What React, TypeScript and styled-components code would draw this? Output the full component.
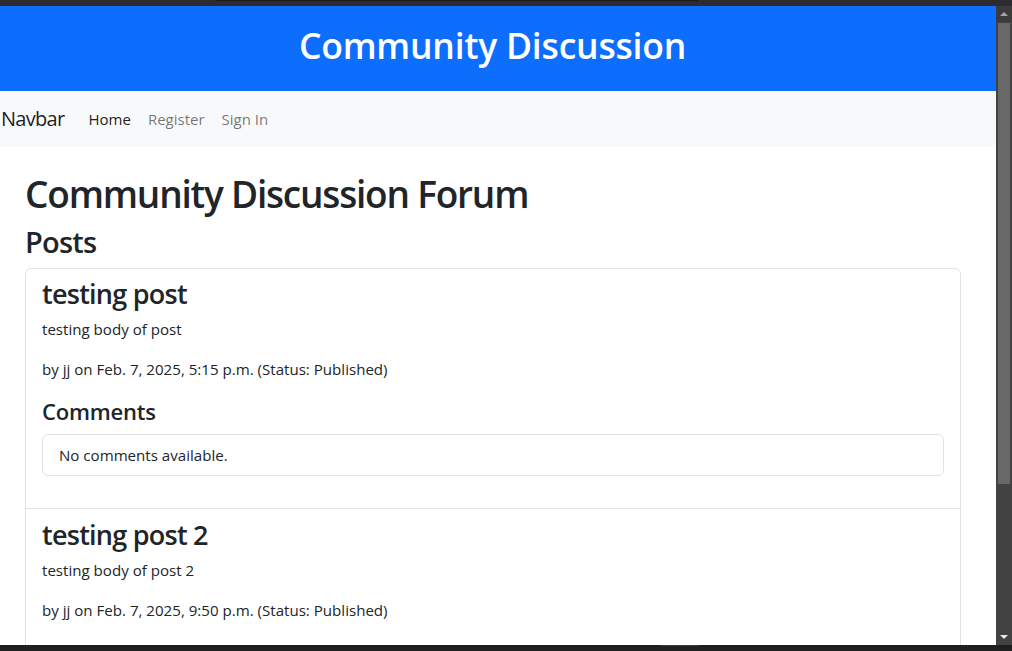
import React from "react";
import styled, { createGlobalStyle } from "styled-components";

const GlobalStyle = createGlobalStyle`
  html, body { margin: 0; padding: 0; overflow: hidden; background: #ffffff; }
  body {
    font-family: "Open Sans", "Noto Sans", "Liberation Sans", sans-serif;
    font-size: 16px;
    line-height: 1.5;
    color: #212529;
  }
  * { box-sizing: border-box; }
`;

const Frame = styled.div`
  width: 1012px;
  height: 651px;
  display: flex;
  flex-direction: column;
  background: #2c2b30;
  overflow: hidden;
`;

const TopChrome = styled.div`
  height: 6px;
  flex: none;
  background: #2c2b30;
  display: flex;
  padding-left: 215px;
`;

const TopChromeTab = styled.div`
  width: 483px;
  height: 1px;
  background: #1c1b1f;
`;

const Middle = styled.div`
  flex: 1;
  display: flex;
  min-height: 0;
`;

const Viewport = styled.div`
  width: 996px;
  flex: none;
  background: #ffffff;
  overflow: hidden;
  display: flex;
  flex-direction: column;
`;

const Scrollbar = styled.div`
  width: 16px;
  flex: none;
  background: #424242;
  display: flex;
  flex-direction: column;
  align-items: center;
`;

const ScrollTop = styled.div`
  width: 16px;
  height: 16px;
  flex: none;
  background: #3b3b3b;
  display: flex;
  align-items: center;
  justify-content: center;
`;

const ScrollThumb = styled.div`
  width: 12px;
  height: 461px;
  margin-top: 1px;
  margin-left: 2px;
  align-self: flex-start;
  background: #686868;
`;

const ScrollSpacer = styled.div`
  flex: 1;
`;

const ScrollBottom = styled.div`
  width: 16px;
  height: 16px;
  flex: none;
  display: flex;
  align-items: center;
  justify-content: center;
`;

const Arrow = styled.div<{ $down?: boolean; $color: string }>`
  width: 0;
  height: 0;
  border-left: 4px solid transparent;
  border-right: 4px solid transparent;
  ${(p) =>
    p.$down
      ? `border-top: 4px solid ${p.$color};`
      : `border-bottom: 4px solid ${p.$color};`}
`;

const BottomChrome = styled.div`
  height: 6px;
  flex: none;
  background: #1f1f1f;
  display: flex;
  padding-left: 661px;
`;

const BottomChromeTab = styled.div`
  width: 38px;
  height: 1px;
  background: #3a3a3a;
`;

const Header = styled.header`
  height: 85px;
  flex: none;
  background: #0d6efd;
  color: #ffffff;
  text-align: center;
  padding: 18px 11px 0 0;
`;

const HeaderTitle = styled.h1`
  margin: 0;
  font-size: 35.5px;
  font-weight: 600;
  line-height: 1.2;
  letter-spacing: -0.2px;
`;

const Navbar = styled.nav`
  height: 56px;
  flex: none;
  background: #f8f9fa;
  display: flex;
  align-items: center;
  padding-left: 1px;
`;

const Brand = styled.span`
  font-size: 20px;
  line-height: 30px;
  color: rgba(0, 0, 0, 0.9);
  margin-right: 15.5px;
  letter-spacing: -0.7px;
`;

const NavList = styled.div`
  display: flex;
  align-items: center;
`;

const NavLink = styled.span<{ $active?: boolean }>`
  font-size: 15px;
  line-height: 24px;
  padding: 0 8.5px;
  color: ${(p) => (p.$active ? "rgba(0, 0, 0, 0.9)" : "rgba(0, 0, 0, 0.55)")};
`;

const Main = styled.main`
  padding: 25px 35px 0 25px;
`;

const PageTitle = styled.h1`
  margin: 0 0 8px;
  font-size: 37px;
  font-weight: 600;
  line-height: 1.2;
  letter-spacing: -1.2px;
`;

const SectionTitle = styled.h2`
  margin: 0 0 8px;
  font-size: 29px;
  font-weight: 600;
  line-height: 36px;
  letter-spacing: -0.8px;
`;

const Card = styled.div`
  border: 1px solid #dee2e6;
  border-radius: 6px;
  background: #ffffff;
`;

const PostItem = styled.article<{ $first?: boolean }>`
  padding: ${(p) => (p.$first ? "8px" : "9px")} 16px 16px;
  border-top: ${(p) => (p.$first ? "none" : "1px solid #dee2e6")};
`;

const PostTitle = styled.h3`
  margin: 0 0 6px;
  font-size: 27px;
  font-weight: 600;
  line-height: 33.6px;
  letter-spacing: -0.75px;
`;

const Text = styled.p`
  margin: 0 0 16px;
  font-size: 15.1px;
  line-height: 24px;
`;

const CommentsTitle = styled.h4`
  margin: 0 0 9px;
  font-size: 22px;
  font-weight: 600;
  line-height: 28px;
  letter-spacing: -0.2px;
`;

const CommentBox = styled.div`
  border: 1px solid #dee2e6;
  border-radius: 6px;
  padding: 8px 16px;
  margin-bottom: 16px;
  font-size: 15.1px;
  line-height: 24px;
`;

type Post = { title: string; body: string; meta: string };

const posts: Post[] = [
  {
    title: "testing post",
    body: "testing body of post",
    meta: "by jj on Feb. 7, 2025, 5:15 p.m. (Status: Published)",
  },
  {
    title: "testing post 2",
    body: "testing body of post 2",
    meta: "by jj on Feb. 7, 2025, 9:50 p.m. (Status: Published)",
  },
];

export default function App() {
  return (
    <>
      <GlobalStyle />
      <Frame>
        <TopChrome>
          <TopChromeTab />
        </TopChrome>
        <Middle>
          <Viewport>
            <Header>
              <HeaderTitle>Community Discussion</HeaderTitle>
            </Header>
            <Navbar>
              <Brand>Navbar</Brand>
              <NavList>
                <NavLink $active>Home</NavLink>
                <NavLink>Register</NavLink>
                <NavLink>Sign In</NavLink>
              </NavList>
            </Navbar>
            <Main>
              <PageTitle>Community Discussion Forum</PageTitle>
              <SectionTitle>Posts</SectionTitle>
              <Card>
                {posts.map((post, i) => (
                  <PostItem key={post.title} $first={i === 0}>
                    <PostTitle>{post.title}</PostTitle>
                    <Text>{post.body}</Text>
                    <Text>{post.meta}</Text>
                    <CommentsTitle>Comments</CommentsTitle>
                    <CommentBox>No comments available.</CommentBox>
                  </PostItem>
                ))}
              </Card>
            </Main>
          </Viewport>
          <Scrollbar>
            <ScrollTop>
              <Arrow $color="#a3a3a3" />
            </ScrollTop>
            <ScrollThumb />
            <ScrollSpacer />
            <ScrollBottom>
              <Arrow $down $color="#e8e8e8" />
            </ScrollBottom>
          </Scrollbar>
        </Middle>
        <BottomChrome>
          <BottomChromeTab />
        </BottomChrome>
      </Frame>
    </>
  );
}
